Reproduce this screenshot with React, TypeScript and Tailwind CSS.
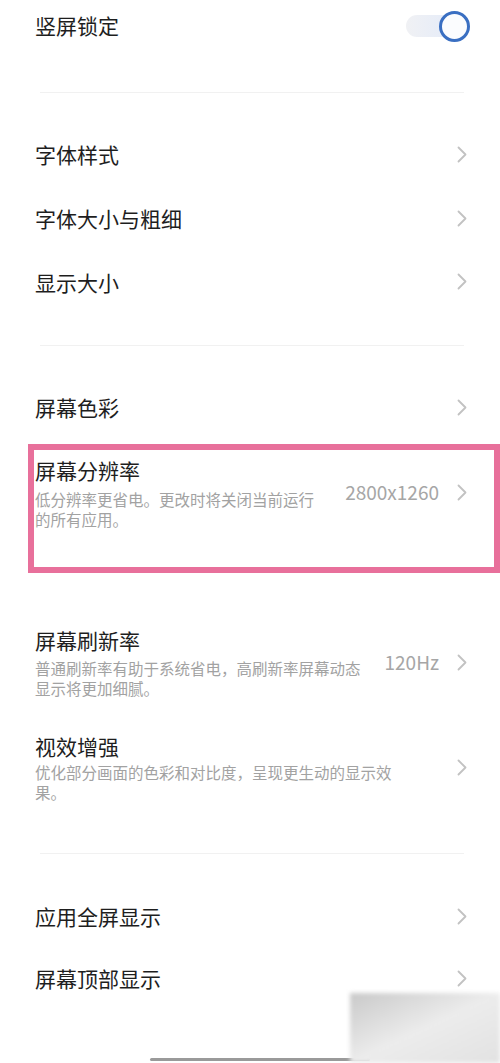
import React from 'react';

const FONT = { fontFamily: '"Noto Sans CJK SC", "Noto Sans", sans-serif' };

function Chevron() {
  return (
    <svg width="10" height="17" viewBox="0 0 10 17" className="shrink-0">
      <polyline points="1.5,1.5 8.5,8.5 1.5,15.5" fill="none" stroke="#c2c2c2" strokeWidth="1.8" strokeLinecap="round" strokeLinejoin="round" />
    </svg>
  );
}

function Row({ title, className = '' }: { title: string; className?: string }) {
  return (
    <div className={`flex items-center justify-between pl-[35px] pr-[33px] ${className}`}>
      <span className="text-[21px] leading-[28px] text-[#1e1e1e]">{title}</span>
      <Chevron />
    </div>
  );
}

function Divider({ className = '' }: { className?: string }) {
  return <div className={`h-px bg-[#f1f1f1] ml-[40px] mr-[36px] ${className}`} />;
}

export default function App() {
  return (
    <div className="relative w-[500px] h-[1063px] bg-white overflow-hidden" style={FONT}>
      {/* lock row */}
      <div className="h-[50px] flex items-center justify-between pl-[35px] pr-[34px]">
        <span className="text-[21px] leading-[28px] text-[#1e1e1e]">竖屏锁定</span>
        <div className="relative w-[60px] h-[22px] rounded-full bg-gradient-to-r from-[#f0f1f4] to-[#e2eafa] flex items-center justify-end mt-[2px]">
          <div className="w-[31px] h-[31px] rounded-full border-[3px] border-[#3a6fc2] bg-[#fbfcfe] -mr-[4px]" />
        </div>
      </div>

      <Divider className="mt-[42px]" />

      <Row title="字体样式" className="h-[64px] mt-[29px]" />
      <Row title="字体大小与粗细" className="h-[64px]" />
      <Row title="显示大小" className="h-[63px]" />

      <Divider className="mt-[32px]" />

      <Row title="屏幕色彩" className="h-[64px] mt-[29px]" />

      {/* highlighted resolution row */}
      <div className="mt-[5px] ml-[28px] w-[472px] border-[6px] border-[#e8709b] pt-[6px] pb-[38px] pl-px pr-[27px] flex items-center justify-between">
        <div>
          <div className="text-[21px] leading-[28px] text-[#1e1e1e]">屏幕分辨率</div>
          <div className="mt-[5px] text-[15.5px] leading-[20px] text-[#a2a2a2]">
            低分辨率更省电。更改时将关闭当前运行
            <br />
            的所有应用。
          </div>
        </div>
        <div className="flex items-center gap-[18px]">
          <span className="text-[19px] text-[#a6a6a6]">2800x1260</span>
          <Chevron />
        </div>
      </div>

      {/* refresh rate */}
      <div className="mt-[53px] flex items-center justify-between pl-[35px] pr-[33px]">
        <div>
          <div className="text-[21px] leading-[28px] text-[#1e1e1e]">屏幕刷新率</div>
          <div className="mt-[4px] text-[15.5px] leading-[20px] text-[#a2a2a2]">
            普通刷新率有助于系统省电，高刷新率屏幕动态
            <br />
            显示将更加细腻。
          </div>
        </div>
        <div className="flex items-center gap-[18px]">
          <span className="text-[19px] text-[#a6a6a6]">120Hz</span>
          <Chevron />
        </div>
      </div>

      {/* visual enhancement */}
      <div className="mt-[34px] flex items-center justify-between pl-[35px] pr-[33px]">
        <div>
          <div className="text-[21px] leading-[28px] text-[#1e1e1e]">视效增强</div>
          <div className="mt-[2px] text-[15.5px] leading-[20px] text-[#a2a2a2]">
            优化部分画面的色彩和对比度，呈现更生动的显示效
            <br />
            果。
          </div>
        </div>
        <Chevron />
      </div>

      <Divider className="mt-[51px]" />

      <Row title="应用全屏显示" className="h-[62px] mt-[31px]" />
      <Row title="屏幕顶部显示" className="h-[62px]" />

      {/* home indicator */}
      <div className="absolute left-[150px] bottom-[2px] w-[220px] h-[3px] rounded-full bg-[#9a9a9a]" />

      {/* blurred watermark */}
      <div className="absolute left-[350px] top-[993px] w-[150px] h-[70px] bg-gradient-to-br from-[#c9c9c9] via-[#ececec] to-[#e2e2e2] blur-[2px]" />
    </div>
  );
}
